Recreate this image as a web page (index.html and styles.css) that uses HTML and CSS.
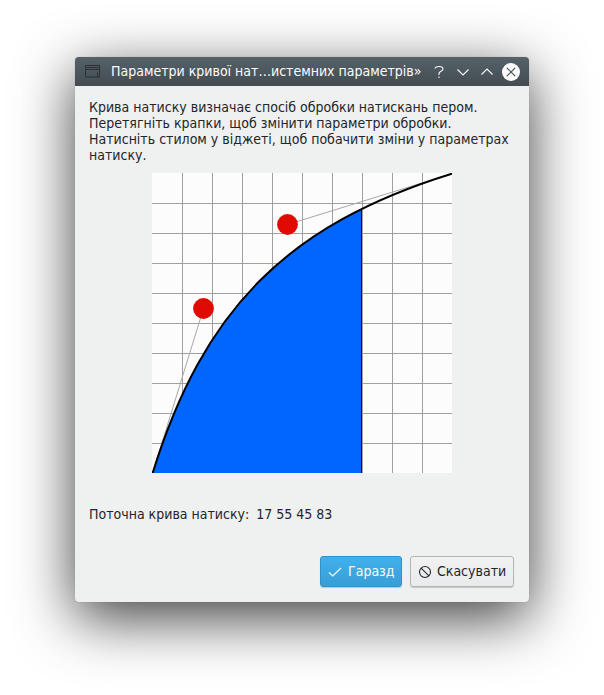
FILE: index.html
```html
<!DOCTYPE html>
<html lang="uk">
<head>
<meta charset="utf-8">
<title>Параметри кривої натиску</title>
<link rel="stylesheet" href="styles.css">
</head>
<body>
<main class="dialog">
  <header class="titlebar">
    <svg class="app-icon" width="16" height="17" viewBox="0 0 16 17"><path d="M.5 2.5h14v11.5h-14zM.5 6.5h14M1.5 4.5h12M12.5 9.5v4.5"/></svg>
    <h1 class="title">Параметри кривої нат…истемних параметрів»</h1>
    <div class="controls">
      <svg width="18" height="18" viewBox="0 0 18 18"><path d="M5 5.5C5 2.7 13 2.7 13 6C13 8.3 9 8.3 9 10.5V12M9 13.5V15"/></svg>
      <svg width="18" height="18" viewBox="0 0 18 18"><path d="M3.5 6.5L9 12L14.5 6.5"/></svg>
      <svg width="18" height="18" viewBox="0 0 18 18"><path d="M3.5 11.5L9 6L14.5 11.5"/></svg>
      <svg class="close" width="18" height="18" viewBox="0 0 18 18"><circle cx="9" cy="9" r="9"/><path d="M4.8 4.8l8.4 8.4M13.2 4.8l-8.4 8.4"/></svg>
    </div>
  </header>
  <section class="content">
    <p class="help">Крива натиску визначає спосіб обробки натискань пером.<br>Перетягніть крапки, щоб змінити параметри обробки.<br>Натисніть стилом у віджеті, щоб побачити зміни у параметрах<br>натиску.</p>
    <svg class="chart" width="300" height="300" viewBox="0 0 300 300">
      <rect class="paper" width="300" height="300"/>
      <path class="grid" d="M30.5 0v300M60.5 0v300M90.5 0v300M120.5 0v300M150.5 0v300M180.5 0v300M210.5 0v300M240.5 0v300M270.5 0v300M0 30.5h300M0 60.5h300M0 90.5h300M0 120.5h300M0 150.5h300M0 180.5h300M0 210.5h300M0 240.5h300M0 270.5h300"/>
      <clipPath id="pressure"><rect width="210" height="300"/></clipPath>
      <g clip-path="url(#pressure)">
        <path class="area" d="M.5 300.5C51.5 135.5 135.5 51.5 300.5 .5V300.5Z"/>
        <path class="limit" d="M209.5 36V300"/>
      </g>
      <path class="handle" d="M.5 300.5L51.5 135.5M300.5 .5L135.5 51.5"/>
      <path class="curve" d="M.5 300.5C51.5 135.5 135.5 51.5 300.5 .5"/>
      <circle class="point" cx="51.5" cy="135.5" r="10.4"/>
      <circle class="point" cx="135.5" cy="51.5" r="10.4"/>
    </svg>
    <p class="current"><span>Поточна крива натиску:</span><span>17 55 45 83</span></p>
    <footer class="actions">
      <button class="button primary"><svg width="16" height="16" viewBox="0 0 16 16"><path d="M2 8.5L5.7 12L14 4"/></svg><span>Гаразд</span></button>
      <button class="button"><svg width="16" height="16" viewBox="0 0 16 16"><circle cx="8" cy="8" r="5.5"/><path d="M4.1 4.1l7.8 7.8"/></svg><span>Скасувати</span></button>
    </footer>
  </section>
</main>
</body>
</html>
```
FILE: styles.css
```css
* { box-sizing: border-box; }
body {
  margin: 0;
  height: 695px;
  padding: 57px 75px 93px;
  background: #fff;
  overflow: hidden;
  color: #232629;
  font: 14px/16px "DejaVu Sans Condensed", "DejaVu Sans", sans-serif;
  font-stretch: condensed;
}
.dialog {
  width: 454px;
  height: 545px;
  display: flex;
  flex-direction: column;
  border-radius: 4px;
  background: #eff0f0;
  box-shadow: 0 16px 58px rgba(0, 0, 0, .76), 0 0 1px rgba(0, 0, 0, .3);
}
.titlebar {
  height: 29px;
  flex: none;
  display: flex;
  align-items: center;
  padding: 0 9px 0 10px;
  border-radius: 4px 4px 0 0;
  background: linear-gradient(#566169, #434c52);
  color: #fcfcfc;
}
.app-icon { fill: none; stroke: #2b3033; stroke-width: 1; }
.title { flex: 1; margin: 0 0 0 10px; padding-bottom: 2px; font: inherit; font-stretch: condensed; white-space: nowrap; }
.controls { display: flex; gap: 6px; }
.controls svg { fill: none; stroke: #fcfcfc; stroke-width: 1.1; }
.controls .close circle { fill: #fcfcfc; stroke: none; }
.controls .close path { stroke: #475057; stroke-width: 1.2; }
.content { flex: 1; display: flex; flex-direction: column; padding: 13px 15px 15px 14px; }
.help { margin: 0; white-space: nowrap; }
.chart { display: block; margin: 10px 0 0 63px; }
.paper { fill: #fcfcfc; }
.grid { fill: none; stroke: #a0a0a4; }
.area { fill: #06f; }
.limit { stroke: #001430; fill: none; }
.handle { stroke: #a8a8aa; fill: none; }
.curve { stroke: #000; stroke-width: 2; fill: none; }
.point { fill: #e10a00; }
.current { display: flex; gap: 7px; margin: 33px 0 0; }
.actions { display: flex; justify-content: flex-end; gap: 8px; margin-top: auto; }
.button {
  height: 31px;
  width: 104px;
  display: flex;
  align-items: center;
  gap: 4px;
  padding: 0 6px;
  border: 1px solid #b5b6b7;
  border-radius: 3px;
  background: linear-gradient(#f2f2f3, #e9eaeb);
  box-shadow: 0 1px 1px rgba(0, 0, 0, .18);
  color: #232629;
  font: inherit;
  font-stretch: condensed;
}
.button svg { flex: none; fill: none; stroke: #232629; stroke-width: 1.1; }
.button span { padding-bottom: 2px; }
.primary { width: 82px; gap: 5px; background: linear-gradient(#40b1ee, #3a9dd5); border-color: #3292c8; color: #fcfcfc; }
.primary svg { stroke: #fcfcfc; }
```
